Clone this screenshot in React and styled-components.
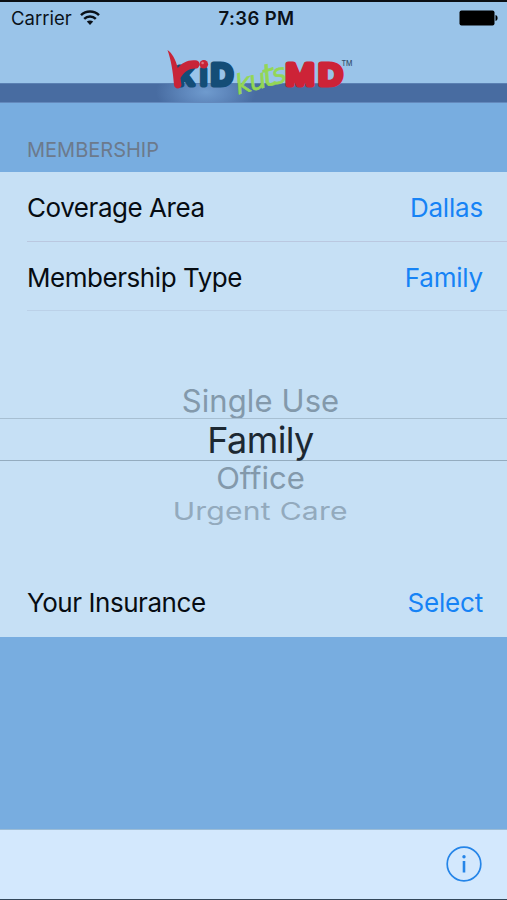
import React, { useState } from 'react';
import styled, { createGlobalStyle } from 'styled-components';

const GlobalStyle = createGlobalStyle`
  * {
    box-sizing: border-box;
  }

  body {
    margin: 0;
    background: #78ade0;
    font-family: Inter, 'Liberation Sans', sans-serif;
  }
`;

const Screen = styled.div`
  display: flex;
  flex-direction: column;
  width: 507px;
  height: 900px;
  overflow: hidden;
  background: #78ade0;
  border-top: 2px solid #0b0f14;
  border-bottom: 1px solid #33475a;
`;

const Header = styled.header`
  height: 81px;
  flex: none;
  background: #9ac4e9;
`;

const StatusBar = styled.div`
  display: grid;
  grid-template-columns: 1fr auto 1fr;
  align-items: center;
  height: 32px;
  padding: 0 9px 0 11px;
  color: #0a1119;
`;

const Carrier = styled.div`
  display: flex;
  align-items: center;
  gap: 8px;
  font-size: 18.5px;
`;

const Clock = styled.div`
  padding-left: 4px;
  font-size: 18.5px;
  font-weight: 600;
  letter-spacing: 0.4px;
`;

const Battery = styled.svg`
  justify-self: end;
`;

const LogoHolder = styled.div`
  display: flex;
  justify-content: center;
  padding: 12px 0 0 12px;
`;

const Logo = styled.svg`
  position: relative;
  flex: none;
  overflow: visible;
  z-index: 1;
`;

const Banner = styled.div`
  height: 20px;
  flex: none;
  border-top: 1px solid #5a80b3;
  border-bottom: 1px solid #6389bd;
  background: radial-gradient(ellipse 50px 26px at 206px 8px, #6f9bce 0%, #6089be 40%, rgba(72, 108, 161, 0) 100%), #486ca1;
`;

const SectionTitle = styled.h2`
  height: 69px;
  flex: none;
  margin: 0;
  padding: 34px 27px 0;
  color: #6c7a8c;
  font-size: 20px;
  font-weight: 400;
  line-height: 26px;
`;

const List = styled.div`
  height: 465px;
  flex: none;
  background: #c6e0f5;
`;

const Row = styled.div`
  display: flex;
  justify-content: space-between;
  align-items: center;
  height: ${({ $height }) => $height || 69}px;
  margin-left: 27px;
  padding: 2px 24px 0 0;
  border-bottom: 1px solid ${({ $line }) => $line || 'transparent'};
  font-size: 26px;
`;

const Label = styled.span`
  color: #060c12;
  letter-spacing: -0.45px;
`;

const Value = styled.span`
  color: #1683f5;
  letter-spacing: -0.2px;
`;

const Picker = styled.div`
  display: flex;
  flex-direction: column;
  align-items: center;
  height: 256px;
  padding-top: 71px;
  padding-left: 14px;
`;

const Option = styled.div`
  display: flex;
  justify-content: center;
  align-items: center;
  height: ${({ $height }) => $height}px;
  color: ${({ $color }) => $color};
  font-size: ${({ $size }) => $size}px;
  letter-spacing: ${({ $spacing }) => $spacing || 0}px;
  white-space: nowrap;
  transform: scale(${({ $scale }) => $scale || '1, 1'});
`;

const SelectedOption = styled(Option)`
  width: 507px;
  margin-left: -14px;
  padding-left: 14px;
  border-top: 1px solid #a7bfd2;
  border-bottom: 1px solid #94acbf;
`;

const Toolbar = styled.footer`
  display: flex;
  justify-content: flex-end;
  align-items: center;
  height: 70px;
  flex: none;
  margin-top: auto;
  padding: 0 25px 1px 0;
  border-top: 1px solid #9bbcd6;
  background: #d3e8fd;
`;

const InfoButton = styled.button`
  display: flex;
  padding: 0;
  border: none;
  background: none;
  cursor: pointer;
`;

const options = [
  { name: 'Single Use', height: 36, size: 31, spacing: 0.1, color: '#8399ab', scale: '1, 1' },
  { name: 'Family', height: 43, size: 36, spacing: -0.6, color: '#1c2832' },
  { name: 'Office', height: 33, size: 31, spacing: 0, color: '#8399ab', scale: '1, 0.97' },
  { name: 'Urgent Care', height: 34, size: 29, spacing: 0.2, color: '#93aabd', scale: '1.04, 0.84' },
];

const WifiIcon = () => (
  <svg width="20" height="16" viewBox="0 0 20 16" fill="none" stroke="#0a1119" strokeWidth="2.5">
    <path d="M1 5.2 C6 0.3 14 0.3 19 5.2" />
    <path d="M4.2 8.8 C7.4 5.8 12.6 5.8 15.8 8.8" />
    <path d="M10 15 L6.8 11.6 C8.6 10 11.4 10 13.2 11.6 Z" fill="#0a1119" stroke="none" />
  </svg>
);

const KidKutsLogo = () => (
  <Logo width="190" height="52" viewBox="166 46 190 52" fontFamily="Inter, sans-serif">
    <g fill="#144d77" stroke="#144d77" strokeWidth="5" strokeLinejoin="round" fontWeight="500" fontSize="28">
      <text x="178" y="85" fontSize="24" textLength="17" lengthAdjust="spacingAndGlyphs">K</text>
      <text x="201.3" y="85" fontWeight="400">ı</text>
      <text x="212" y="85" textLength="22" lengthAdjust="spacingAndGlyphs">D</text>
    </g>
    {/* red figure leaning over the K */}
    <path d="M168.5 50 C173 53 176.5 59 178.8 68 C183 62.5 190 59 198 60.5 C201.5 62 201.5 66.5 198 68.5 C190 67.5 184 73 181.5 78 L182.5 85 C182 89.5 175.5 89.5 175 85 C174 71 172 60 168.5 50 Z" fill="#c82438" />
    <circle cx="204.8" cy="64.2" r="4.3" fill="#c82438" />
    <circle cx="203.6" cy="63" r="1.3" fill="#e27480" />
    <g
      fontFamily="'DejaVu Sans', sans-serif"
      fontStyle="italic"
      fill="#93d755"
      stroke="#93d755"
      strokeWidth="0.6"
      transform="translate(241 94) rotate(-15)"
    >
      <text y="0">
        <tspan x="-2" fontSize="27">k</tspan>
        <tspan x="12" fontSize="27">u</tspan>
        <tspan x="26" fontSize="31">t</tspan>
        <tspan x="35.5" fontSize="27">s</tspan>
      </text>
    </g>
    <g fill="#cd2337" stroke="#cd2337" strokeWidth="5" strokeLinejoin="round" fontWeight="500" fontSize="28">
      <text x="286.7" y="85" textLength="28.5" lengthAdjust="spacingAndGlyphs">M</text>
      <text x="319.5" y="85" textLength="24" lengthAdjust="spacingAndGlyphs">D</text>
    </g>
    <text x="342.5" y="65.5" fontSize="7" fontWeight="500" fill="#34506c">TM</text>
  </Logo>
);

const App = () => {
  const [selected, setSelected] = useState('Family');

  return (
    <>
      <GlobalStyle />
      <Screen>
        <Header>
          <StatusBar>
            <Carrier>
              Carrier
              <WifiIcon />
            </Carrier>
            <Clock>7:36 PM</Clock>
            <Battery width="39" height="16" viewBox="0 0 39 16">
              <rect x="0.5" y="0.5" width="35" height="15" rx="2" />
              <path d="M36.5 5 C39.3 5.5 39.3 10.5 36.5 11 Z" />
            </Battery>
          </StatusBar>
          <LogoHolder>
            <KidKutsLogo />
          </LogoHolder>
        </Header>
        <Banner />
        <SectionTitle>MEMBERSHIP</SectionTitle>
        <List>
          <Row $height={70} $line="#bac8e0">
            <Label>Coverage Area</Label>
            <Value>Dallas</Value>
          </Row>
          <Row $line="#bbd1e8">
            <Label>Membership Type</Label>
            <Value>{selected}</Value>
          </Row>
          <Picker>
            {options.map((option) => {
              const Item = option.name === 'Family' ? SelectedOption : Option;
              return (
                <Item
                  key={option.name}
                  $height={option.height}
                  $size={option.size}
                  $spacing={option.spacing}
                  $color={option.color}
                  $scale={option.scale}
                  onClick={() => setSelected(option.name)}
                >
                  {option.name}
                </Item>
              );
            })}
          </Picker>
          <Row $height={70}>
            <Label>Your Insurance</Label>
            <Value>Select</Value>
          </Row>
        </List>
        <Toolbar>
          <InfoButton>
            <svg width="36" height="36" viewBox="0 0 36 36" fill="none" stroke="#2585e8">
              <circle cx="18" cy="18" r="16.8" strokeWidth="1.7" />
              <path d="M18 15 V26.5" strokeWidth="2.6" />
              <circle cx="18" cy="10.7" r="1.7" fill="#2585e8" stroke="none" />
            </svg>
          </InfoButton>
        </Toolbar>
      </Screen>
    </>
  );
};

export default App;
